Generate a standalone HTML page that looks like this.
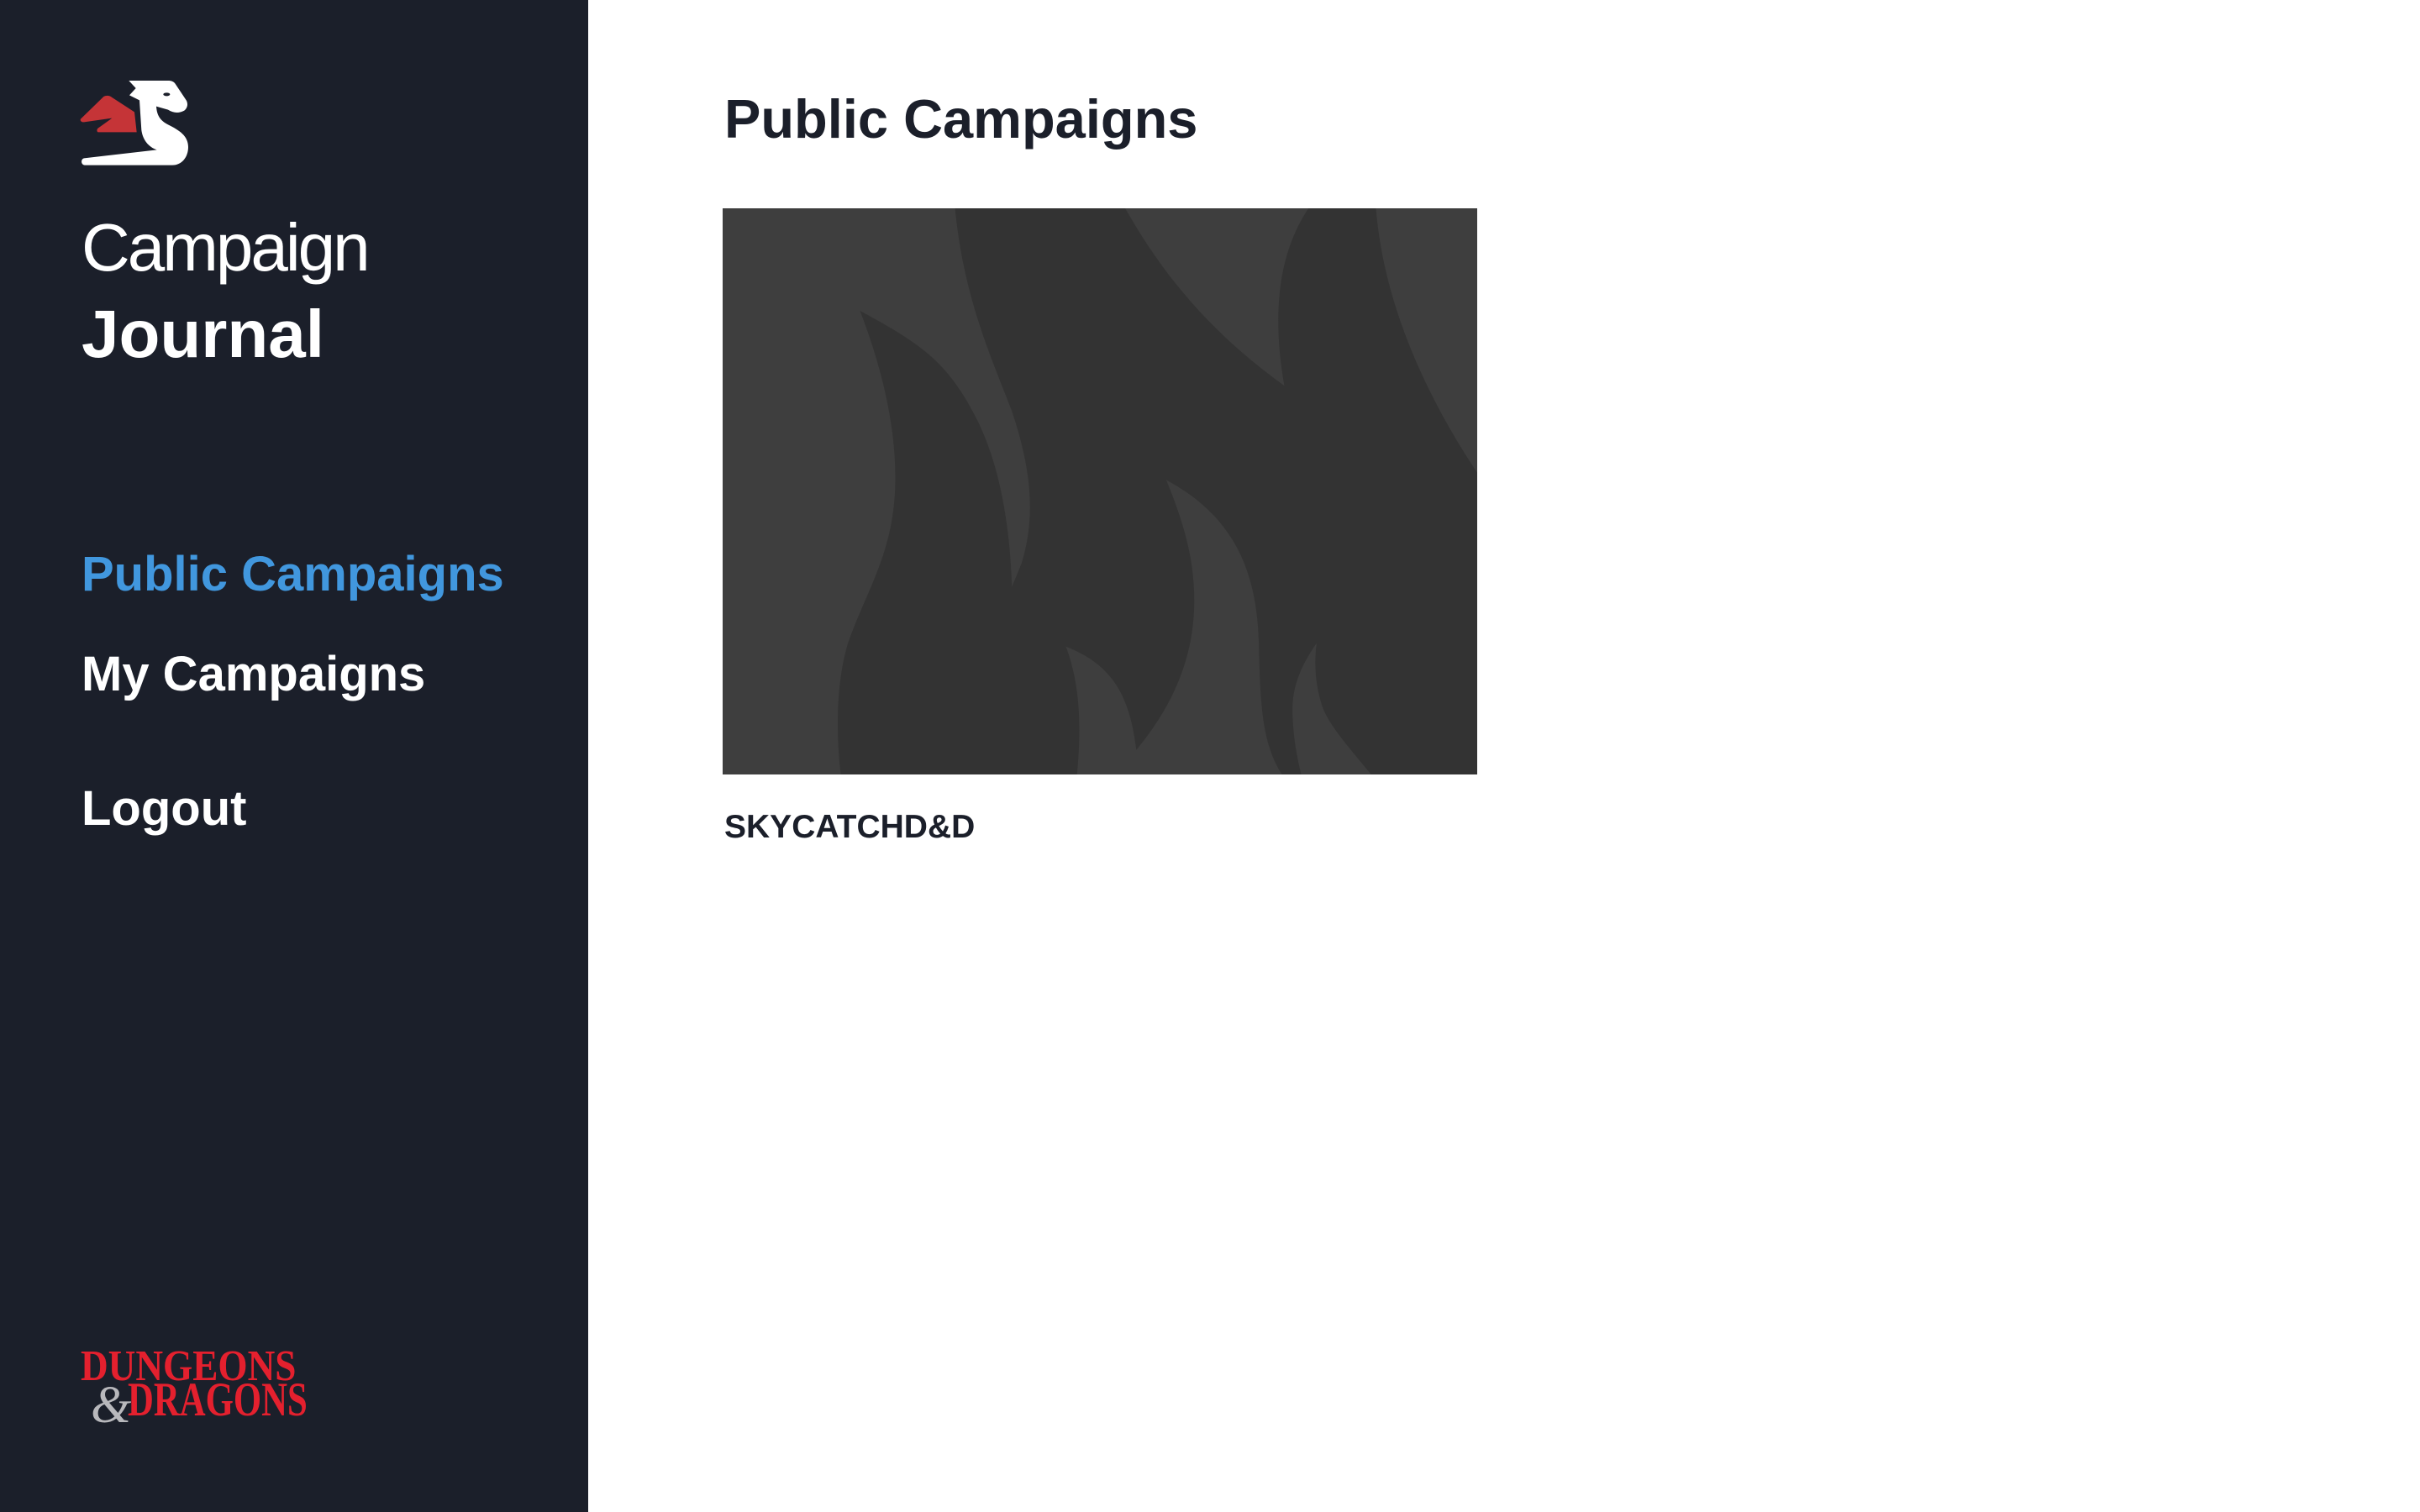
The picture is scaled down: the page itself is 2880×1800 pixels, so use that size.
<!DOCTYPE html>
<html><head><meta charset="utf-8"><style>
*{margin:0;padding:0;box-sizing:border-box}
body{width:2880px;height:1800px;background:#fff;position:relative;overflow:hidden;font-family:"Liberation Sans",sans-serif}
.sb{position:absolute;left:0;top:0;width:700px;height:1800px;background:#1b1f2a}
.t{position:absolute;line-height:1;white-space:nowrap}
</style></head><body>
<div class="sb"></div>
<svg style="position:absolute;left:80px;top:80px" width="200" height="140" viewBox="0 0 600 420">
<path fill="#c53437" d="M48,185 L130,105 C140,100 150,100 160,108 L240,160 L248,232 L110,232 C105,230 105,222 110,218 L160,182 L60,196 C50,197 45,190 48,185 Z"/>
<path fill="#fff" d="M220,48 L245,75 L222,100 L258,118 L265,225 C270,260 290,285 320,295 L60,325 C48,328 48,348 62,350 L375,350 C410,350 432,320 432,285 C432,245 400,225 360,205 C330,190 320,170 318,140 L360,152 C380,165 400,165 418,155 C430,145 432,130 425,118 L385,58 C378,50 370,48 360,48 Z"/>
<ellipse cx="355" cy="97" rx="12" ry="6" fill="#1b1f2a"/>
</svg>
<div class="t" style="left:97px;top:255px;font-size:80px;color:#fff;letter-spacing:-3px">Campaign</div>
<div class="t" style="left:97px;top:358px;font-size:80px;font-weight:bold;color:#fff">Journal</div>
<div class="t" style="left:97px;top:655px;font-size:58px;font-weight:bold;color:#4197de">Public Campaigns</div>
<div class="t" style="left:97px;top:774px;font-size:58px;font-weight:bold;color:#fff">My Campaigns</div>
<div class="t" style="left:97px;top:934px;font-size:58px;font-weight:bold;color:#fff">Logout</div>
<div class="t" style="left:96px;top:1601px;font-size:52px;font-weight:bold;color:#e4202e;font-family:'Liberation Serif',serif;transform:scaleX(0.87);transform-origin:left">DUNGEONS</div>
<div class="t" style="left:108px;top:1642px;font-size:62px;color:#b8b8bc;font-family:'Liberation Serif',serif;font-style:italic">&amp;</div>
<div class="t" style="left:152px;top:1638px;font-size:57px;font-weight:bold;color:#e4202e;font-family:'Liberation Serif',serif;transform:scaleX(0.75);transform-origin:left">DRAGONS</div>
<div class="t" style="left:862px;top:109px;font-size:65px;font-weight:bold;color:#1b1f2a">Public Campaigns</div>
<svg style="position:absolute;left:860px;top:248px" width="898" height="674" viewBox="0 0 1565 1563" preserveAspectRatio="none">
<rect width="1565" height="1563" fill="#333"/>
<g fill="#3e3e3e">
<path d="M0,0 L482,0 C500,250 560,420 600,560 C640,720 650,850 620,980 L600,1045 C595,850 570,700 530,590 C470,430 420,380 285,283 C330,440 360,600 358,760 C355,950 300,1050 260,1200 C235,1310 235,1450 245,1563 L0,1563 Z"/>
<path d="M835,0 C920,200 1020,350 1165,490 C1140,300 1150,130 1215,0 Z"/>
<path d="M1355,0 C1370,250 1450,500 1565,730 L1565,0 Z"/>
<path d="M920,750 C960,880 980,980 978,1100 C975,1250 930,1380 858,1495 C845,1350 810,1260 712,1210 C740,1310 745,1420 735,1563 L1160,1563 C1120,1480 1115,1380 1112,1200 C1108,1000 1060,850 920,750 Z"/>
<path d="M1232,1200 C1190,1280 1180,1340 1182,1400 C1184,1460 1190,1510 1200,1563 L1345,1563 C1300,1490 1260,1430 1245,1380 C1232,1330 1225,1270 1232,1200 Z"/>
</g></svg>
<div class="t" style="left:862px;top:965px;font-size:39px;font-weight:bold;color:#1b1f2a">SKYCATCHD&amp;D</div>
</body></html>
